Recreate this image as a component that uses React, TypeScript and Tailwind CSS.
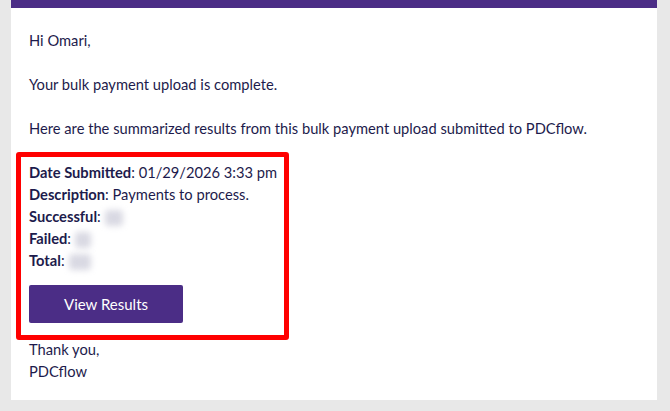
import React from "react";

const rows: { label: string; value?: string; blurW?: number }[] = [
  { label: "Date Submitted", value: "01/29/2026 3:33 pm" },
  { label: "Description", value: "Payments to process." },
  { label: "Successful", blurW: 18 },
  { label: "Failed", blurW: 16 },
  { label: "Total", blurW: 22 },
];

function Blurred({ width }: { width: number }) {
  // value hidden in the screenshot
  return (
    <span
      className="ml-1 inline-block h-[16px] align-middle rounded-sm bg-[#d9d9e3] blur-[3px]"
      style={{ width }}
    />
  );
}

export default function App() {
  return (
    <div className="min-h-[411px] w-full bg-[#e8e8e8] pl-[11px] pr-[13px] font-['Lato','Liberation_Sans',sans-serif] text-[14.7px] leading-[22px] text-[#1d1b4c]">
      <div className="bg-white">
        <div className="h-[8px] bg-[#4b2d86]" />
        <div className="px-[18px] pt-[21px] pb-[18px]">
          <p>Hi Omari,</p>
          <p className="mt-[22px]">Your bulk payment upload is complete.</p>
          <p className="mt-[22px]">
            Here are the summarized results from this bulk payment upload submitted to PDCflow.
          </p>

          <div className="relative mt-[22px]">
            {/* highlight annotation */}
            <div className="pointer-events-none absolute -left-[13px] -top-[9px] h-[188px] w-[273px] rounded-[3px] border-[5px] border-[#ff0000]" />
            <ul>
              {rows.map((r) => (
                <li key={r.label}>
                  <span className="font-bold">{r.label}</span>:
                  {r.value ? ` ${r.value}` : <Blurred width={r.blurW ?? 18} />}
                </li>
              ))}
            </ul>
            <button className="mt-[14px] flex h-[38px] w-[154px] items-center justify-center rounded-[2px] bg-[#4b2d86] text-[15px] text-white">
              View Results
            </button>
          </div>

          <p className="mt-[15px]">Thank you,</p>
          <p>PDCflow</p>
        </div>
      </div>
    </div>
  );
}
